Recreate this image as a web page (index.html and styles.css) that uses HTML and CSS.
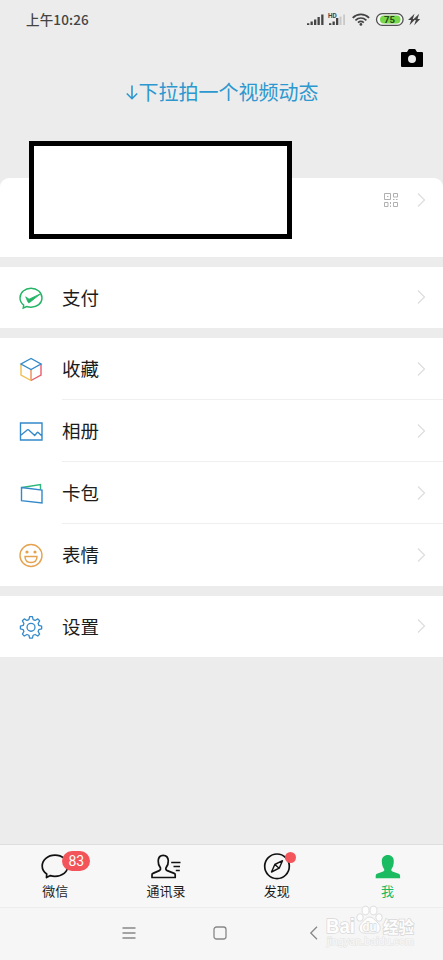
FILE: index.html
```html
<!DOCTYPE html>
<html lang="zh-CN">
<head>
<meta charset="utf-8">
<title>我</title>
<link rel="stylesheet" href="styles.css">
</head>
<body>
<div class="phone">
  <header class="status">
    <span class="time">上午10:26</span>
    <svg class="status-icons" width="116" height="20" viewBox="0 0 116 20">
      <g fill="#444"><path d="M0 13.200h2.300V15H0zM3.500 11.500h2.300V15H3.500zM7 9.400h2.300V15H7zM10.500 7.100h2.300V15h-2.300zM14.200 4.500h2.300V15h-2.300z"/><path d="M22 13.200h2.300V15H22zM25.500 11.500h2.300V15h-2.300zM29 8h2.300v7H29z"/></g>
      <path d="M32.500 6.500h2V15h-2zM36.200 4.500H38V15h-1.800z" fill="#c8c8c8"/>
      <text class="hd" x="21" y="7.600">HD</text>
      <g fill="none" stroke="#444" stroke-width="1.800"><path d="M45.700 7.800c4.800-4.600 11.600-4.600 16.400 0M48.400 10.300c3.300-3 7.700-3 11 0M51 12.600c1.800-1.500 4-1.500 5.800 0"/></g>
      <circle cx="53.900" cy="14.400" r="1.400" fill="#444"/>
      <rect x="69.500" y="3.700" width="26.600" height="11.600" rx="5.800" fill="#f6f6f6" stroke="#505050" stroke-width="1.300"/>
      <path d="M77 5.500h12.500a4 4 0 0 1 0 8H77a4 4 0 0 1 0-8z" fill="#78d84a"/>
      <text class="battery" x="82.500" y="13" text-anchor="middle">75</text>
      <path d="M107.500 3.800l-6.500 6.300h3.200l-1.700 5.100 6-6.300h-2.700zM112.200 3.800l-6.500 6.300h3.200l-1.700 5.100 6-6.300h-2.700z" fill="#444"/>
    </svg>
  </header>
  <div class="camera-row">
    <svg width="24" height="20" viewBox="0 0 24 20"><path fill="#000" fill-rule="evenodd" d="M2 4h5l1.700-2.700Q9 1 9.500 1h5q.5 0 .8.300L17 4h5q1 0 1 1v13q0 1-1 1H2q-1 0-1-1V5q0-1 1-1zM12 7a4 4 0 1 0 0 8 4 4 0 0 0 0-8z"/></svg>
  </div>
  <div class="pull"><svg width="14" height="18" viewBox="0 0 14 18"><path d="M7 1.500v13M1.800 9.500L7 14.700l5.200-5.200" fill="none" stroke="#2c98cf" stroke-width="1.600"/></svg><span>下拉拍一个视频动态</span></div>
  <section class="profile">
    <div class="redaction"></div>
    <svg class="qr" width="14" height="14" viewBox="0 0 14 14"><g fill="none" stroke="#b0b0b0"><path d="M.5.5h6v6h-6zM9.500.5h4v3.500h-4zM.5 9.500h3.500v4H.5zM9.500 9.500h4v4h-4z"/><path d="M3 3.500h1.500M9 6.500h1.500M12 6.500h1.500M6.500 9v2M6.500 12.500V14"/></g></svg>
    <svg class="chevron" width="9" height="16" viewBox="0 0 9 16"><path d="M1 1.500l6.500 6.500L1 14.500"/></svg>
  </section>
  <section class="group">
    <div class="row">
      <svg class="icon" viewBox="0 0 26 26" stroke="#23b466"><path d="M5.700 20.100C3.300 18.300 2 15.900 2 13 2 7.500 7 3.300 13 3.300S24 7.500 24 13s-5 9.200-11 9.200q-2.200 0-4.300-.700L5.200 23z"/><path d="M7.700 11.800l3.300 2.400L23 8.500 11.300 17.700q-.8.300-1.300-.5z" fill="#23b466" stroke-width=".8"/></svg>
      <div class="label"><span>支付</span><svg class="chevron" width="9" height="16" viewBox="0 0 9 16"><path d="M1 1.500l6.500 6.500L1 14.500"/></svg></div>
    </div>
  </section>
  <section class="group">
    <div class="row">
      <svg class="icon" viewBox="0 0 26 26"><path d="M23 8v11l-10 5.500" stroke="#e85d6c"/><path d="M13 13.500v11" stroke="#ef8a58"/><path d="M3 8v11l10 5.500" stroke="#f3bd4f"/><path d="M13 2.500L3 8l10 5.500L23 8z" stroke="#3489ca"/></svg>
      <div class="label"><span>收藏</span><svg class="chevron" width="9" height="16" viewBox="0 0 9 16"><path d="M1 1.500l6.500 6.500L1 14.500"/></svg></div>
    </div>
    <div class="row">
      <svg class="icon" viewBox="0 0 26 26" stroke="#3489ca"><path d="M2.500 5h21.500v17H2.500zM2.500 17.500l7-5.700q.5-.4 1 0l6.200 5.700 2.500-3q.5-.4 1 0l3.500 3.200"/></svg>
      <div class="label"><span>相册</span><svg class="chevron" width="9" height="16" viewBox="0 0 9 16"><path d="M1 1.500l6.500 6.500L1 14.500"/></svg></div>
    </div>
    <div class="row">
      <svg class="icon" viewBox="0 0 26 26"><path d="M4 7.500l18.500-3v5" stroke="#2cb77b"/><path d="M3.500 7.500L24 10v13L3.500 20.700z" stroke="#3489ca"/></svg>
      <div class="label"><span>卡包</span><svg class="chevron" width="9" height="16" viewBox="0 0 9 16"><path d="M1 1.500l6.500 6.500L1 14.500"/></svg></div>
    </div>
    <div class="row">
      <svg class="icon" viewBox="0 0 26 26" stroke="#e5a34f"><circle cx="13" cy="13.500" r="11"/><path d="M7 14.500h12c0 3.700-2.400 6-6 6s-6-2.300-6-6z"/><g fill="#e5a34f" stroke="none"><circle cx="9" cy="10" r="1.600"/><circle cx="17" cy="10" r="1.600"/></g></svg>
      <div class="label"><span>表情</span><svg class="chevron" width="9" height="16" viewBox="0 0 9 16"><path d="M1 1.500l6.500 6.500L1 14.500"/></svg></div>
    </div>
  </section>
  <section class="group">
    <div class="row">
      <svg class="icon" viewBox="0 0 26 26" stroke="#3489ca"><g transform="translate(1 .8) scale(.925)"><path d="M11.500 2h3l.8 3.200 2.100.9 2.900-1.700 2 2.100-1.600 2.900.8 2.100 3 .8v2.800l-3 .8-.8 2.100 1.600 2.900-2 2-2.900-1.600-2.100.8-.8 3.200h-3l-.8-3.200-2.100-.8-2.900 1.600-2-2L5.300 18l-.8-2.100-3-.8v-2.800l3-.8.8-2.100-1.600-2.900 2-2.100 2.900 1.700 2.100-.9z" stroke-linejoin="round"/><circle cx="13" cy="13.500" r="4.300"/></g></svg>
      <div class="label"><span>设置</span><svg class="chevron" width="9" height="16" viewBox="0 0 9 16"><path d="M1 1.500l6.500 6.500L1 14.500"/></svg></div>
    </div>
  </section>
  <nav class="tabs">
    <div class="tab">
      <div class="tab-icon"><svg width="34" height="30" viewBox="0 0 34 30"><path d="M8.700 23C5.800 21 4.200 18.200 4.200 15 4.200 9 9.700 4.200 17 4.200S29.800 9 29.800 15 24.300 25.300 17 25.300q-2.600 0-4.600-.7l-3.900 2z"/></svg><span class="badge">83</span></div>
      <span>微信</span>
    </div>
    <div class="tab">
      <div class="tab-icon"><svg width="34" height="30" viewBox="0 0 34 30"><path d="M3 26.500v-2.700q0-1 1-1.400l6.300-2.800q1.700-.8 1.200-2.500C10 15 9 12.500 9.200 9.800 9.400 6.300 11.600 4.300 14.200 4.300s4.900 2 5.100 5.500c.2 2.700-.9 5.200-2.400 7.300q-.5 1.700 1.300 2.500l7 2.800q1 .4 1 1.400v2.700z"/><path d="M22.200 11.500h9.300M24.500 15.500h6.500M26.800 19.500h4" stroke-width="1.500"/></svg></div>
      <span>通讯录</span>
    </div>
    <div class="tab">
      <div class="tab-icon"><svg width="34" height="30" viewBox="0 0 34 30"><circle cx="17" cy="15.300" r="12.300"/><path d="M22.500 9.700l-3.300 7.500-7.700 3.800 3.300-7.500zM14.800 13.500l4.400 3.700" stroke-width="1.400"/></svg><span class="dot"></span></div>
      <span>发现</span>
    </div>
    <div class="tab active">
      <div class="tab-icon"><svg width="34" height="30" viewBox="0 0 34 30"><path d="M4.700 27.300v-2.600q0-1.300 1.200-1.900l6.300-2.400q1.600-.7 1-2.200c-1.300-2-2.400-4.300-2.400-8 0-3.900 2.500-6.200 6-6.200s6 2.300 6 6.200c0 3.700-1.100 6-2.400 8q-.6 1.500 1 2.200l6.300 2.400q1.400.6 1.400 1.900v2.600z"/></svg></div>
      <span>我</span>
    </div>
  </nav>
  <footer class="system">
    <svg class="menu" width="14" height="14" viewBox="0 0 14 14"><path d="M.5 2h13M.5 7h13M.5 12h13"/></svg>
    <svg class="home" width="14" height="14" viewBox="0 0 14 14"><rect x="1" y="1" width="12" height="12" rx="2.500"/></svg>
    <svg class="back" width="9" height="14" viewBox="0 0 9 14"><path d="M8 .8L1.800 7 8 13.200"/></svg>
  </footer>
  <svg class="watermark" width="98" height="50" viewBox="0 0 98 50">
    <g fill="#fdfdfd" stroke="#dedede"><ellipse cx="44.500" cy="8.500" rx="3.500" ry="4.300"/><ellipse cx="52.500" cy="8.500" rx="3.500" ry="4.300"/><ellipse cx="39" cy="15.500" rx="3.200" ry="3.800"/><ellipse cx="58" cy="15.500" rx="3.200" ry="3.800"/><path d="M48.500 15c-3 0-4.500 3-7 5-3.500 3-4 6.500-2.500 9.200 1.500 2.300 4.500 2 9.500 2s8.500.3 10-2c1.500-2.700.8-6.500-2.500-9.200-2.500-2-4-5-7.500-5z"/></g>
    <text class="wm-main" x="5" y="31" textLength="29" lengthAdjust="spacingAndGlyphs">Bai</text>
    <text class="wm-du" x="41.500" y="29" textLength="14" lengthAdjust="spacingAndGlyphs">du</text>
    <text class="wm-cn" x="62" y="31">经验</text>
    <text class="wm-url" x="6" y="43" textLength="87" lengthAdjust="spacingAndGlyphs">jingyan.baidu.com</text>
  </svg>
</div>
</body>
</html>
```
FILE: styles.css
```css
* { box-sizing: border-box; }
body { margin: 0; background: #ececec; font-family: Roboto, "Noto Sans CJK SC", sans-serif; color: #1c1c1c; }
svg { display: block; flex: none; }
.phone { position: relative; width: 443px; height: 960px; overflow: hidden; display: flex; flex-direction: column; background: #ececec; }
.status { height: 40px; padding: 0 20px 0 26px; display: flex; align-items: center; justify-content: space-between; }
.time { margin-bottom: 2px; font: 500 13.500px/20px "Noto Sans CJK SC", sans-serif; letter-spacing: .15px; color: #444; }
.hd { font: 700 6.500px Roboto, sans-serif; fill: #444; }
.battery { font: 700 9.500px Roboto, sans-serif; fill: #26481b; }
.camera-row { height: 36px; padding: 8px 19px 0 0; display: flex; justify-content: flex-end; }
.pull { height: 102px; padding-top: 2px; display: flex; justify-content: center; align-items: flex-start; font-size: 20px; line-height: 30px; color: #2c98cf; }
.pull svg { margin-top: 6px; }
.profile { height: 79px; margin-bottom: 10px; padding: 14px 17px 0 29px; display: flex; background: #fff; border-radius: 9px 9px 0 0; }
.redaction { width: 263px; height: 98px; margin-top: -51px; margin-right: auto; border: 5px solid #000; background: #fff; flex: none; }
.qr { margin: 1px 19px 0 0; }
.chevron { fill: none; stroke: #dedede; stroke-width: 1.3; }
.group { margin-bottom: 10px; background: #fff; }
.row { display: flex; align-items: center; height: 62px; padding-left: 18px; }
.row:only-child { height: 61px; }
.icon { width: 26px; height: 26px; margin-right: 18px; fill: none; stroke-width: 1.4; }
.label { flex: 1; height: 100%; padding-right: 17px; display: flex; align-items: center; justify-content: space-between; border-bottom: 1px solid #efefef; font-size: 18.500px; line-height: 28px; }
.label span { padding-top: 3px; }
.row:last-child .label { border-bottom-color: transparent; }
.tabs { height: 63px; margin-top: auto; display: flex; background: #f7f7f7; border-top: 1px solid #dedede; }
.tab { flex: 1; padding-top: 6px; display: flex; flex-direction: column; align-items: center; font-size: 13px; line-height: 22px; }
.tab-icon { position: relative; height: 30px; fill: none; stroke: #111; stroke-width: 1.7; stroke-linejoin: round; }
.active { color: #1bbb62; }
.active .tab-icon { fill: #1bbb62; stroke: none; }
.badge { position: absolute; left: 24px; top: 0; width: 28px; height: 20px; border-radius: 10px; background: #f35459; color: #fff; text-align: center; font-size: 14px; line-height: 21px; }
.dot { position: absolute; left: 25px; top: 1px; width: 11px; height: 11px; border-radius: 50%; background: #f4555b; }
.system { height: 53px; padding: 0 125px 2px 122px; display: flex; align-items: center; background: #f6f6f6; border-top: 1px solid #ededed; fill: none; stroke: #888; stroke-width: 1.3; }
.home { margin-left: 77px; }
.back { margin-left: auto; }
.watermark { position: absolute; left: 321px; top: 902px; }
.wm-main, .wm-du, .wm-cn { fill: #fdfdfd; stroke: #d8d8d8; stroke-width: 1.5px; paint-order: stroke; font: 700 20px "Liberation Sans", sans-serif; }
.wm-du { font-size: 13px; }
.wm-cn { font: 700 15.500px "Noto Sans CJK SC", sans-serif; }
.wm-url { fill: #f9f9f9; stroke: #e4e4e4; stroke-width: 1px; paint-order: stroke; font: 10px "Liberation Sans", sans-serif; }
```
